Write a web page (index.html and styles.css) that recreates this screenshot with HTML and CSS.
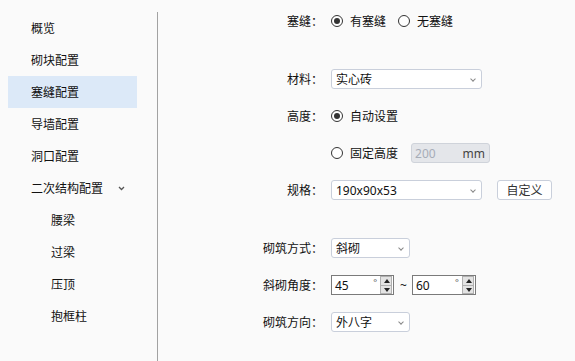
FILE: index.html
```html
<!DOCTYPE html>
<html lang="zh-CN">
<head>
    <meta charset="UTF-8">
    <title>塞缝配置</title>
    <link rel="stylesheet" href="styles.css">
</head>
<body>
    <div class="sidebar">
        <div class="nav-item">概览</div>
        <div class="nav-item">砌块配置</div>
        <div class="nav-item active">塞缝配置</div>
        <div class="nav-item">导墙配置</div>
        <div class="nav-item">洞口配置</div>
        <div class="nav-item">二次结构配置
            <svg class="chev" width="7" height="5" viewBox="0 0 7 5"><path d="M1 1 L3.5 3.5 L6 1" fill="none" stroke="#555" stroke-width="1.3"/></svg>
        </div>
        <div class="nav-item sub">腰梁</div>
        <div class="nav-item sub">过梁</div>
        <div class="nav-item sub">压顶</div>
        <div class="nav-item sub">抱框柱</div>
    </div>
    <div class="divider"></div>
    <div class="form">
        <div class="row first">
            <label>塞缝：</label>
            <span class="radio checked"></span><span class="opt">有塞缝</span>
            <span class="radio"></span><span class="opt">无塞缝</span>
        </div>
        <div class="row big">
            <label>材料：</label>
            <div class="select wide">实心砖<span class="caret"></span></div>
        </div>
        <div class="row">
            <label>高度：</label>
            <span class="radio checked"></span><span class="opt">自动设置</span>
        </div>
        <div class="row">
            <label></label>
            <span class="radio"></span><span class="opt">固定高度</span>
            <div class="unit-input"><span class="val">200</span><span class="unit">mm</span></div>
        </div>
        <div class="row">
            <label>规格：</label>
            <div class="select wide">190x90x53<span class="caret"></span></div>
            <button class="btn">自定义</button>
        </div>
        <div class="row big">
            <label>砌筑方式：</label>
            <div class="select short">斜砌<span class="caret"></span></div>
        </div>
        <div class="row">
            <label>斜砌角度：</label>
            <div class="spin">
                <span class="num">45</span><span class="deg">°</span>
                <span class="arrows"><span class="up"></span><span class="down"></span></span>
            </div>
            <span class="tilde">~</span>
            <div class="spin">
                <span class="num">60</span><span class="deg">°</span>
                <span class="arrows"><span class="up"></span><span class="down"></span></span>
            </div>
        </div>
        <div class="row">
            <label>砌筑方向：</label>
            <div class="select short">外八字<span class="caret"></span></div>
        </div>
    </div>
</body>
</html>
```

FILE: styles.css
```css
html, body {
    margin: 0;
    height: 100%;
}
body {
    display: flex;
    background: #fafafa;
    font-family: "Noto Sans", "Noto Sans CJK SC", sans-serif;
    font-size: 12px;
    color: #111;
    overflow: hidden;
}
.sidebar {
    width: 157px;
    padding-top: 12px;
    display: flex;
    flex-direction: column;
}
.nav-item {
    height: 32px;
    margin: 0 20px 0 8px;
    padding-left: 23px;
    display: flex;
    align-items: center;
}
.nav-item.sub {
    padding-left: 43px;
}
.nav-item.active {
    background: #dce9f8;
}
.chev {
    margin-left: 15px;
}
.divider {
    width: 1px;
    margin-top: 12px;
    background: #a2a2a2;
}
.form {
    flex: 1;
    padding-top: 11px;
}
.row {
    display: flex;
    align-items: center;
    height: 20px;
    margin-top: 17px;
}
.row.first {
    margin-top: 0;
}
.row.big {
    margin-top: 38px;
}
.row label {
    width: 165px;
    margin-right: 8px;
    text-align: right;
}
.radio {
    width: 10px;
    height: 10px;
    border: 1px solid #333;
    border-radius: 50%;
    background: #fff;
    position: relative;
    margin-right: 7px;
}
.radio.checked::after {
    content: "";
    position: absolute;
    left: 2px;
    top: 2px;
    width: 6px;
    height: 6px;
    border-radius: 50%;
    background: #333;
}
.opt {
    margin-right: 12px;
}
.select {
    height: 18px;
    border: 1px solid #c9cfdb;
    border-radius: 3px;
    background: #fff;
    padding-left: 4px;
    display: flex;
    align-items: center;
    position: relative;
    box-sizing: content-box;
}
.select.wide {
    width: 145px;
}
.select.short {
    width: 73px;
}
.caret {
    position: absolute;
    right: 6px;
    top: 7px;
    width: 3px;
    height: 3px;
    border-right: 1px solid #888;
    border-bottom: 1px solid #888;
    transform: rotate(45deg);
}
.unit-input {
    width: 70px;
    height: 18px;
    margin-left: 1px;
    border: 1px solid #cfd3da;
    border-radius: 3px;
    background: #e4e6ea;
    padding: 0 4px 0 3px;
    display: flex;
    align-items: center;
    justify-content: space-between;
}
.unit-input .val {
    color: #a7adb8;
}
.unit-input .unit {
    color: #444;
}
.btn {
    margin-left: 15px;
    width: 55px;
    height: 20px;
    padding: 0;
    border: 1px solid #c9cfdb;
    border-radius: 3px;
    background: #fff;
    font-family: inherit;
    font-size: 12px;
    color: #333;
}
.spin {
    width: 58px;
    height: 18px;
    border: 1px solid #7a7a7a;
    background: #fff;
    display: flex;
    align-items: center;
    padding-left: 3px;
    position: relative;
}
.spin + .tilde + .spin {
    width: 59px;
}
.spin .num {
    flex: 1;
}
.spin .deg {
    font-size: 9px;
    align-self: flex-start;
    margin-right: 3px;
    color: #555;
}
.arrows {
    width: 12px;
    height: 18px;
    display: flex;
    flex-direction: column;
    margin-right: 1px;
}
.arrows span {
    flex: 1;
    background: #e3e3e3;
    border: 1px solid #b0b0b0;
    position: relative;
}
.arrows .up {
    border-bottom: none;
}
.arrows span::after {
    content: "";
    position: absolute;
    left: 3px;
    width: 0;
    height: 0;
    border-left: 3px solid transparent;
    border-right: 3px solid transparent;
}
.arrows .up::after {
    top: 2px;
    border-bottom: 4px solid #222;
}
.arrows .down::after {
    top: 2px;
    border-top: 4px solid #222;
}
.tilde {
    margin: 0 5px 0 6px;
}
```
